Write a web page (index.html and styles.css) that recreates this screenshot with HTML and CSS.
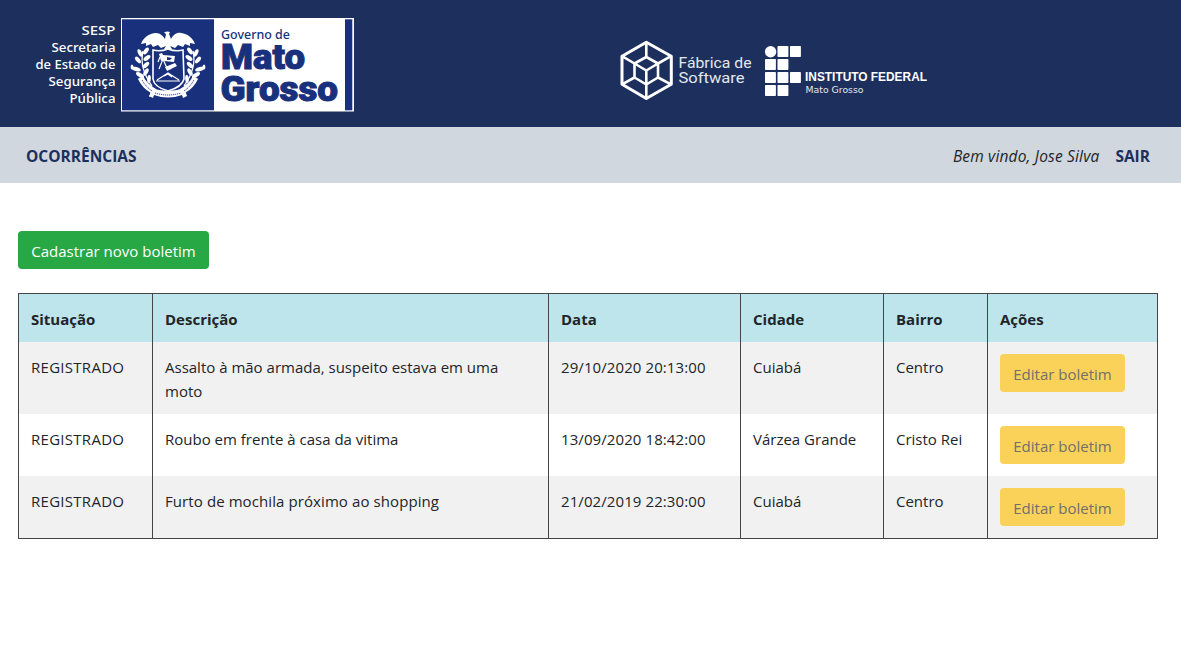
FILE: index.html
```html
<!DOCTYPE html>
<html lang="pt-BR">
<head>
<meta charset="utf-8">
<title>Ocorrências</title>
<link rel="stylesheet" href="styles.css">
</head>
<body>
<header class="brand">
  <svg class="logo-sesp" width="320" height="94" viewBox="35 18 320 94">
    <g class="sesp" text-anchor="end">
      <text x="115.500" y="35" textLength="34" lengthAdjust="spacingAndGlyphs">SESP</text>
      <text x="115.500" y="52" textLength="64" lengthAdjust="spacingAndGlyphs">Secretaria</text>
      <text x="115.500" y="69" textLength="80" lengthAdjust="spacingAndGlyphs">de Estado de</text>
      <text x="115.500" y="86" textLength="67" lengthAdjust="spacingAndGlyphs">Segurança</text>
      <text x="115.500" y="103" textLength="46" lengthAdjust="spacingAndGlyphs">Pública</text>
    </g>
    <rect x="121" y="18" width="233" height="93.500" fill="#fff"/>
    <rect x="122" y="19.300" width="92" height="91" fill="#19307d"/>
    <rect x="345" y="19.300" width="7.300" height="91" fill="#19307d"/>
    <g fill="#fff">
      <path d="M141 44C143 38 149 33 156 33C160 33 163 36 165 39L166 34L164 32.500Q167 31 170 32L169 34L171 39C173 35 177 32 181 33C188 34 193 38 195 44L190 43L190 46L185 44L183 47L178 45L175 48L170 46L172 49H164L166 46L161 48L158 45L153 47L151 44L146 46L146 43Z"/>
      <g id="branch">
        <ellipse cx="146" cy="51" rx="2" ry="4" transform="rotate(35 146 51)"/>
        <ellipse cx="140" cy="53" rx="2" ry="4" transform="rotate(-25 140 53)"/>
        <ellipse cx="147" cy="58" rx="2" ry="4" transform="rotate(55 147 58)"/>
        <ellipse cx="138" cy="60" rx="2" ry="4" transform="rotate(-40 138 60)"/>
        <ellipse cx="146" cy="65" rx="2" ry="4" transform="rotate(45 146 65)"/>
        <ellipse cx="136" cy="69" rx="2" ry="5" transform="rotate(-72 136 69)"/>
        <ellipse cx="146" cy="72" rx="2" ry="4" transform="rotate(30 146 72)"/>
        <ellipse cx="140" cy="75" rx="2" ry="4.500" transform="rotate(-60 140 75)"/>
        <ellipse cx="149" cy="79" rx="1.800" ry="4" transform="rotate(5 149 79)"/>
        <ellipse cx="132" cy="67" rx="1.400" ry="2.500"/>
        <path d="M143 51Q139 68 152 86" fill="none" stroke="#fff" stroke-width="1.300"/>
        <path d="M139 78L143 76Q147 84 156 89L153 98L149 96L151 93Q142 88 138 79Z"/>
      </g>
      <use href="#branch" transform="translate(336 0) scale(-1 1)"/>
      <path d="M152 88Q168 94 184 88L187 96L182 95Q168 100 154 95L149 97Z"/>
    </g>
    <g fill="none" stroke="#19307d" stroke-width="1" stroke-dasharray="1.200 .8">
      <path d="M142 80Q146 87 152 91M155 93Q168 97 181 93M184 91Q190 87 194 80"/>
    </g>
    <path d="M153 50Q160 52 168 49Q176 52 183 50L184 79Q182 87 168 91Q154 87 153 79Z" fill="#19307d" stroke="#fff" stroke-width="1.600"/>
    <path d="M156 81H180M157 80L168 73L179 80M164 76L168 74L172 77M159 69L163 59L166 66L171 69M160 57L158 62" fill="none" stroke="#fff" stroke-width="1.200"/>
    <path d="M163 55L175 56L174 62L164 61ZM165 67L175 63L177 66L167 71ZM159 54L162 53L165 59L161 61Z" fill="#fff"/>
    <path d="M167 57L172 58L170 60L167 60Z" fill="#19307d"/>
    <g fill="#19307d">
      <text class="gov" x="221" y="38.500" textLength="69" lengthAdjust="spacingAndGlyphs">Governo de</text>
      <text class="state" x="221" y="69" textLength="84" lengthAdjust="spacingAndGlyphs">Mato</text>
      <text class="state" x="220.500" y="100.500" textLength="117.500" lengthAdjust="spacingAndGlyphs">Grosso</text>
    </g>
  </svg>
  <div class="partners">
    <svg width="132" height="62" viewBox="620 40 132 62">
      <g fill="none" stroke="#fff" stroke-width="3" stroke-linejoin="round">
        <path d="M646.300 42.300L671.300 56.200V84.300L646.300 98.500L622 84.300V56.200Z"/>
        <path stroke-width="2.600" d="M646.300 57L658 63.500V77.500L646.300 84.500L634.500 77.500V63.500ZM634.500 63.500L646.300 70.500L658 63.500M646.300 70.500V98M646.300 42V57M622 56.200L634.500 63.500M671 56.200L658 63.500M622 84.300L634.500 77.500M671 84.300L658 77.500"/>
      </g>
      <text class="fab" x="678.500" y="68" textLength="73" lengthAdjust="spacingAndGlyphs">Fábrica de</text>
      <text class="fab" x="678.500" y="83" textLength="66" lengthAdjust="spacingAndGlyphs">Software</text>
    </svg>
    <svg width="163" height="52" viewBox="765 45 163 52">
      <g fill="#fff">
        <circle cx="770.600" cy="51.700" r="5.700"/>
        <rect x="777.500" y="46" width="10.900" height="11" rx=".7"/>
        <rect x="790" y="46" width="10.900" height="11" rx=".7"/>
        <rect x="765" y="59" width="10.900" height="11" rx=".7"/>
        <rect x="777.500" y="59" width="10.900" height="11" rx=".7"/>
        <rect x="765" y="72" width="10.900" height="11" rx=".7"/>
        <rect x="777.500" y="72" width="10.900" height="11" rx=".7"/>
        <rect x="790" y="72" width="10.900" height="11" rx=".7"/>
        <rect x="765" y="85" width="10.900" height="11" rx=".7"/>
        <rect x="777.500" y="85" width="10.900" height="11" rx=".7"/>
      </g>
      <text class="inst" x="805" y="81" textLength="122" lengthAdjust="spacingAndGlyphs">INSTITUTO FEDERAL</text>
      <text class="inst-sub" x="805.500" y="92.700" textLength="58" lengthAdjust="spacingAndGlyphs">Mato Grosso</text>
    </svg>
  </div>
</header>
<nav class="menu">
  <a class="menu-link menu-main">OCORRÊNCIAS</a>
  <em class="welcome">Bem vindo, Jose Silva</em>
  <a class="menu-link menu-exit">SAIR</a>
</nav>
<main class="content">
  <a class="btn btn-new">Cadastrar novo boletim</a>
  <table class="reports">
    <colgroup><col class="c1"><col class="c2"><col class="c3"><col class="c4"><col class="c5"><col class="c6"></colgroup>
    <thead><tr><th>Situação</th><th>Descrição</th><th>Data</th><th>Cidade</th><th>Bairro</th><th>Ações</th></tr></thead>
    <tbody>
      <tr><td class="status">REGISTRADO</td><td>Assalto à mão armada, suspeito estava em uma moto</td><td class="date">29/10/2020 20:13:00</td><td>Cuiabá</td><td>Centro</td><td><a class="btn btn-edit">Editar boletim</a></td></tr>
      <tr><td class="status">REGISTRADO</td><td>Roubo em frente à casa da vitima</td><td class="date">13/09/2020 18:42:00</td><td>Várzea Grande</td><td>Cristo Rei</td><td><a class="btn btn-edit">Editar boletim</a></td></tr>
      <tr><td class="status">REGISTRADO</td><td class="loose">Furto de mochila próximo ao shopping</td><td class="date">21/02/2019 22:30:00</td><td>Cuiabá</td><td>Centro</td><td><a class="btn btn-edit">Editar boletim</a></td></tr>
    </tbody>
  </table>
</main>
</body>
</html>
```
FILE: styles.css
```css
* { box-sizing: border-box; }
body { margin: 0; background: #fff; color: #212529; font: 15px/24px "Open Sans", "Noto Sans", sans-serif; }
svg { display: block; }
.brand { height: 127px; padding: 18px 0 0 35px; background: #1c2f5d; display: flex; align-items: flex-start; }
.partners { display: flex; gap: 13px; padding-top: 22px; margin-left: 265px; }
.partners svg + svg { margin-top: 5px; }
.sesp { fill: #fff; font: 500 13.300px "Noto Sans", sans-serif; }
.gov { font: 500 12.500px "Noto Sans", sans-serif; }
.state { font: 900 35px Roboto, sans-serif; stroke: #19307d; stroke-width: 1px; }
.fab { fill: #e4e7ee; font: 400 14.800px Roboto, sans-serif; }
.inst { fill: #fff; font: bold 12px "Liberation Sans", sans-serif; }
.inst-sub { fill: #e4e7ee; font: 9.500px "DejaVu Sans", sans-serif; }
.menu { height: 56px; padding: 2px 31px 0 26px; background: #d0d7de; display: flex; align-items: center; }
.menu-link { color: #1c2f5d; font-size: 15.500px; font-weight: 700; }
.menu-main { margin-right: auto; }
.welcome { margin-right: 16px; font-size: 15.500px; letter-spacing: .17px; }
.content { padding: 48px 23px 0 18px; }
.btn { display: block; height: 38px; border-radius: 4px; text-align: center; line-height: 41px; white-space: nowrap; }
.btn-new { width: 191px; background: #28a745; color: #fff; margin-bottom: 24px; }
.reports { width: 1140px; table-layout: fixed; border: 1px solid #444; border-spacing: 0; }
.reports th, .reports td { padding: 13px 12px 11px; text-align: left; vertical-align: top; border-right: 1px solid #444; }
.reports th { height: 48px; background: #bee5eb; font-weight: 700; }
.reports td:last-child { padding: 12px; }
.reports th:last-child, .reports td:last-child { border-right: 0; }
.reports tbody tr:nth-child(odd) { background: #f1f1f1; }
.reports .status { letter-spacing: .28px; }
.reports .date { letter-spacing: .09px; }
.reports .loose { letter-spacing: .09px; }
.c1 { width: 134px; }
.c2 { width: 396px; }
.c3 { width: 192px; }
.c4 { width: 143px; }
.c5 { width: 104px; }
.c6 { width: 169px; }
.btn-edit { width: 125px; background: #fad25a; color: #70706c; }
```
